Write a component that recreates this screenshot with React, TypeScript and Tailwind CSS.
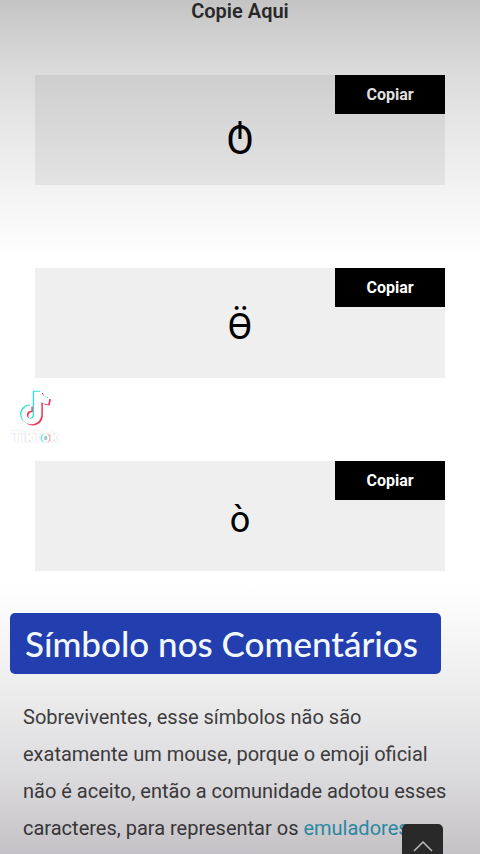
import React from 'react';

interface SymbolCardProps {
  children: React.ReactNode;
}

const SymbolCard: React.FC<SymbolCardProps> = ({ children }) => {
  return (
    <section className="h-[110px] bg-[#f0efef]">
      <div className="flex justify-end">
        <button className="h-[39px] w-[110px] bg-black text-[16px] font-bold text-white">Copiar</button>
      </div>
      <p className="flex justify-center text-black">{children}</p>
    </section>
  );
};

const NOTE =
  'M20 3h8c1 4 4 6.500 9 7l-1.500 7c-3 0-5.500-1-7.500-2.500V28c0 6.500-5 11-11 11S6 34.500 6 28.500 11 18 17 18v6c-3 0-5 1.800-5 4.500s2 4.500 4.500 4.500c2.300 0 3.500-1.800 3.500-4.500z';

const TikTokMark = () => (
  <div className="absolute top-[389px] left-[9px] flex w-[52px] flex-col items-center">
    <svg viewBox="0 0 42 42" className="h-[38px] w-[38px]" aria-hidden="true">
      <path d={NOTE} fill="#ee3b5b" transform="translate(1.700 1.300)" />
      <path d={NOTE} fill="#35e0dc" transform="translate(-1.500 -1)" />
      <path d={NOTE} fill="#fff" />
    </svg>
    <span className="text-[15px] leading-[20px] font-black text-white [text-shadow:0_0_2px_#ccc]">
      TikT<span className="[text-shadow:-1px_0_1px_#45d9d5,1px_0_1px_#ee5b78]">o</span>k
    </span>
  </div>
);

export default function App() {
  return (
    <div className="relative h-screen overflow-hidden bg-white font-['Roboto','Noto_Sans',sans-serif]">
      <main>
        <h1 className="text-center text-[20px] leading-[22px] font-semibold text-[#333]">Copie Aqui</h1>

        <div className="mt-[53px] flex flex-col gap-[83px] px-[35px]">
          <SymbolCard>
            <span className="relative text-[40px] leading-[54px]">
              O
              <span className="absolute top-[7px] left-1/2 h-[18px] w-[3px] -translate-x-1/2 bg-black" />
            </span>
          </SymbolCard>
          <SymbolCard>
            <span className="text-[36px] leading-[40px]">Ӫ</span>
          </SymbolCard>
          <SymbolCard>
            <span className="text-[36px] leading-[40px]">ò</span>
          </SymbolCard>
        </div>

        <p className="mt-[128px] px-[23px] text-[20px] leading-[37px] text-[#444]">
          Sobreviventes, esse símbolos não são exatamente um mouse, porque o emoji oficial não é aceito, então a
          comunidade adotou esses caracteres, para representar os{' '}
          <a href="#emuladores" className="text-[#35abc8]">emuladores</a>
        </p>
      </main>

      {/* shading at the top and bottom of the video */}
      <div className="pointer-events-none absolute inset-x-0 top-0 h-[260px] bg-[linear-gradient(to_bottom,rgba(0,0,0,0.230),rgba(0,0,0,0.140)_27%,rgba(0,0,0,0.050)_71%,transparent)]" />
      <div className="pointer-events-none absolute inset-x-0 bottom-0 h-[270px] bg-[linear-gradient(to_bottom,transparent,rgba(10,0,15,0.070)_38%,rgba(10,0,15,0.140)_70%,rgba(10,0,15,0.240))]" />

      <button
        aria-label="Voltar ao topo"
        className="absolute right-[37px] bottom-0 flex h-[30px] w-[41px] justify-center rounded-t-[5px] bg-[#292929] pt-[16px]"
      >
        <svg viewBox="0 0 20 12" className="h-[12px] w-[20px]" fill="none" stroke="#bbb" strokeWidth="1.500">
          <path d="M1 11l9-9 9 9" />
        </svg>
      </button>

      <TikTokMark />
      <h2 className="absolute top-[613px] left-[10px] rounded-[5px] bg-[#233eae] pr-[23px] pl-[15px] text-[35px] leading-[61px] font-medium whitespace-nowrap text-[#f2f8ff] font-['Lato','Open_Sans',sans-serif]">
        Símbolo nos Comentários
      </h2>
    </div>
  );
}
